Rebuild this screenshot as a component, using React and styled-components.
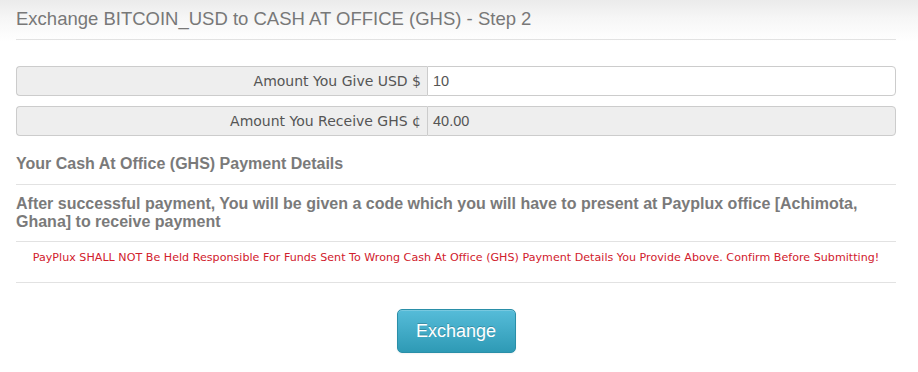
import React from "react";
import styled, { createGlobalStyle } from "styled-components";

const Global = createGlobalStyle`
  html, body { margin: 0; padding: 0; background: #fff; }
  body { font-family: "Liberation Sans", Arial, sans-serif; }
  * { box-sizing: border-box; }
`;

const Page = styled.div`
  width: 918px;
  height: 372px;
  background: linear-gradient(to bottom, #ebebeb 0px, #f6f6f6 18px, #ffffff 42px);
  padding: 0 22px 0 16px;
  overflow: hidden;
`;

const Title = styled.h3`
  margin: 0;
  height: 39px;
  padding-top: 9px;
  font-family: "Liberation Sans", Arial, sans-serif;
  font-weight: normal;
  font-size: 18.5px;
  line-height: 20px;
  color: #787878;
`;

const Rule = styled.div`
  height: 1px;
  background: #e2e2e2;
  margin-top: ${(p) => p.$mt || 0}px;
`;

const Form = styled.div`
  display: flex;
  flex-direction: column;
  gap: 10px;
  margin-top: 26px;
`;

const Group = styled.div`
  display: flex;
  height: 30px;
`;

const Addon = styled.div`
  width: 411px;
  display: flex;
  align-items: center;
  justify-content: flex-end;
  padding-right: 6px;
  background: #eeeeee;
  border: 1px solid #cccccc;
  border-right: 0;
  border-radius: 4px 0 0 4px;
  font-family: "DejaVu Sans", Verdana, sans-serif;
  font-size: 14px;
  color: #555;
`;

const Field = styled.div`
  flex: 1;
  display: flex;
  align-items: center;
  padding-left: 5px;
  background: ${(p) => (p.$disabled ? "#eeeeee" : "#ffffff")};
  border: 1px solid #cccccc;
  border-radius: 0 4px 4px 0;
  font-family: "Liberation Sans", Arial, sans-serif;
  font-size: 14.5px;
  color: #555;
`;

const SectionTitle = styled.div`
  margin-top: 19px;
  font-family: "Liberation Sans", Arial, sans-serif;
  font-weight: bold;
  font-size: 16px;
  line-height: 18px;
  color: #7a7a7a;
`;

const Note = styled.p`
  margin: 10px 0 0;
  font-family: "Liberation Sans", Arial, sans-serif;
  font-weight: bold;
  font-size: 16px;
  line-height: 18px;
  color: #7a7a7a;
`;

const Warning = styled.div`
  margin-top: 9px;
  height: 31px;
  text-align: center;
  font-family: "DejaVu Sans", Verdana, sans-serif;
  font-size: 11.1px;
  letter-spacing: 0.02px;
  line-height: 14px;
  color: #d1202c;
`;

const Actions = styled.div`
  display: flex;
  justify-content: center;
  margin-top: 26px;
`;

const Button = styled.button`
  width: 119px;
  height: 44px;
  border: 1px solid #2a8fa8;
  border-radius: 5px;
  background: linear-gradient(to bottom, #56bcd9, #2e9ab5);
  color: #fff;
  font-family: "Liberation Sans", Arial, sans-serif;
  font-size: 18px;
  text-shadow: 0 -1px 0 rgba(0, 0, 0, 0.2);
  box-shadow: inset 0 1px 0 rgba(255, 255, 255, 0.2), 0 1px 2px rgba(0, 0, 0, 0.05);
  cursor: pointer;
`;

export default function App() {
  return (
    <>
      <Global />
      <Page>
        <Title>Exchange BITCOIN_USD to CASH AT OFFICE (GHS) - Step 2</Title>
        <Rule />
        <Form>
          <Group>
            <Addon>Amount You Give USD $</Addon>
            <Field>10</Field>
          </Group>
          <Group>
            <Addon>Amount You Receive GHS ¢</Addon>
            <Field $disabled>40.00</Field>
          </Group>
        </Form>
        <SectionTitle>Your Cash At Office (GHS) Payment Details</SectionTitle>
        <Rule $mt={11} />
        <Note>
          After successful payment, You will be given a code which you will have to present at Payplux office [Achimota, Ghana] to receive payment
        </Note>
        <Rule $mt={10} />
        <Warning>
          PayPlux SHALL NOT Be Held Responsible For Funds Sent To Wrong Cash At Office (GHS) Payment Details You Provide Above. Confirm Before Submitting!
        </Warning>
        <Rule />
        <Actions>
          <Button>Exchange</Button>
        </Actions>
      </Page>
    </>
  );
}
